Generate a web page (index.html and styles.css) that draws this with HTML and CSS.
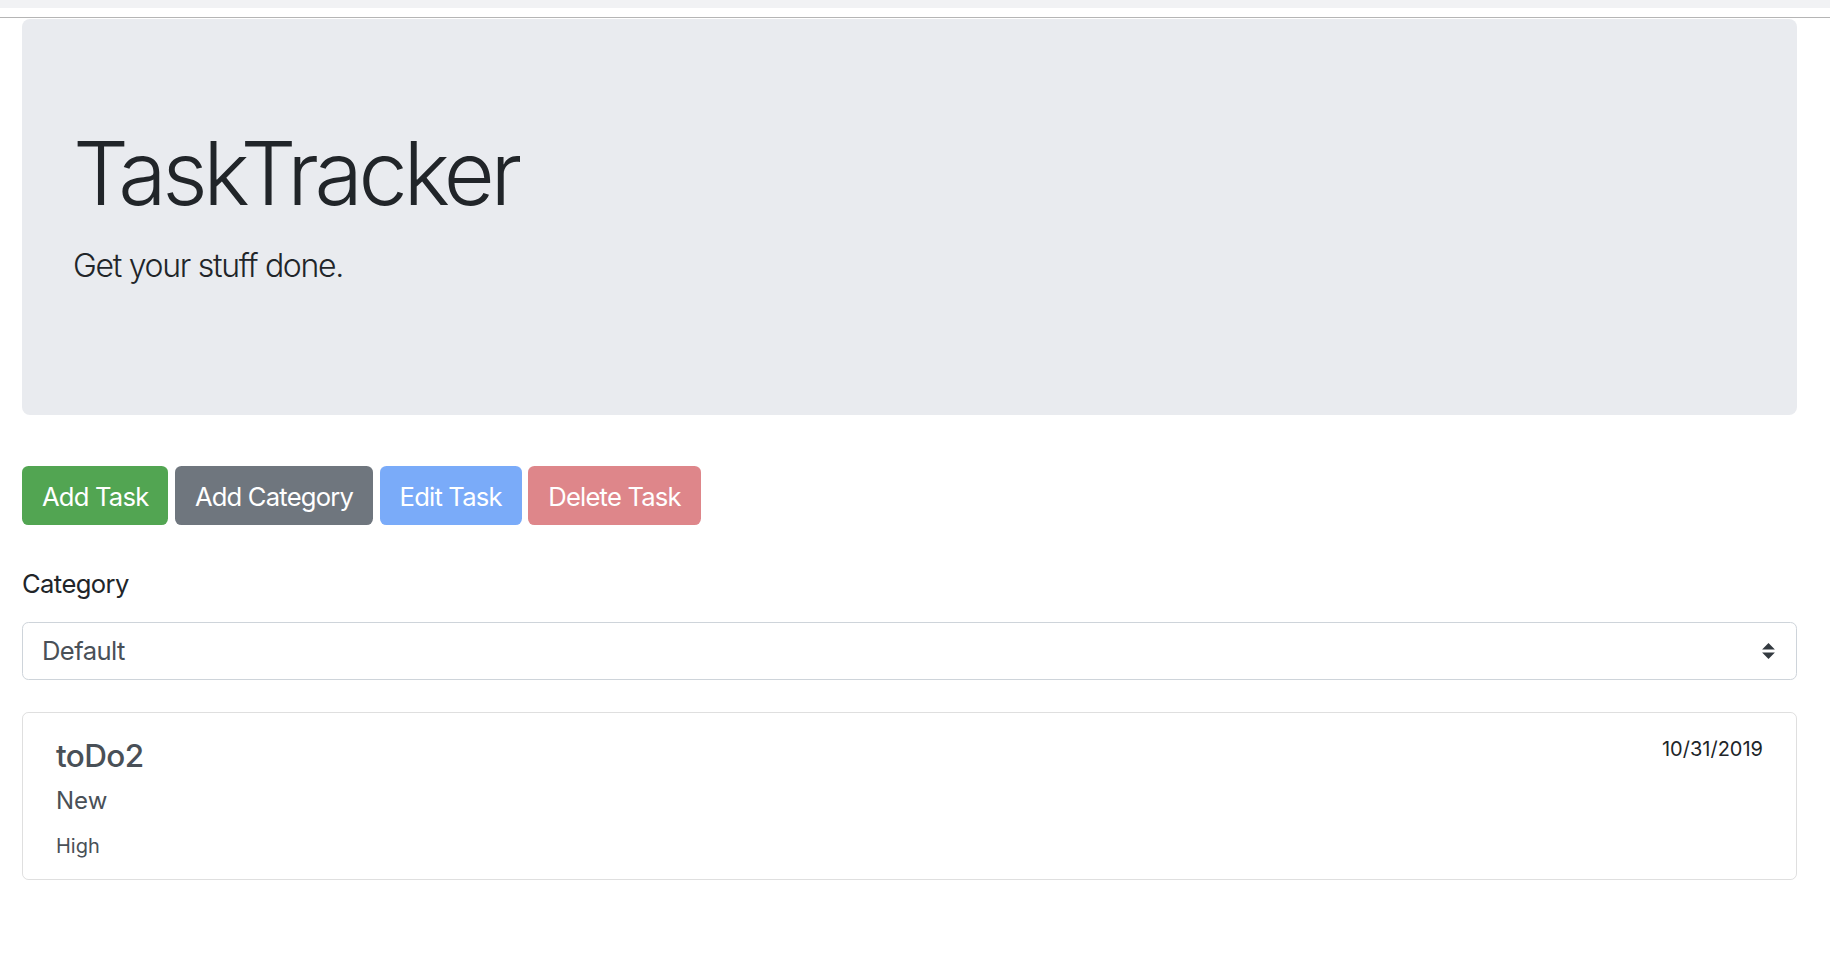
FILE: index.html
```html
<!DOCTYPE html>
<html lang="en">
<head>
<meta charset="utf-8">
<title>TaskTracker</title>
<link rel="stylesheet" href="styles.css">
</head>
<body>
<div class="topbar"></div>
<div class="topline"></div>
<main class="page">
  <section class="jumbotron">
    <h1 class="display">TaskTracker</h1>
    <p class="lead">Get your stuff done.</p>
  </section>
  <div class="actions">
    <button class="btn btn-success">Add Task</button>
    <button class="btn btn-secondary">Add Category</button>
    <button class="btn btn-primary">Edit Task</button>
    <button class="btn btn-danger">Delete Task</button>
  </div>
  <div class="form-group">
    <label class="label" for="cat">Category</label>
    <div class="select" id="cat">
      <span class="select-value">Default</span>
      <svg class="select-arrows" viewBox="0 0 4 5" width="13" height="16"><path d="M2 0L0 2h4zm0 5L0 3h4z" fill="#343a40"/></svg>
    </div>
  </div>
  <div class="card">
    <div class="card-body">
      <div class="card-main">
        <h5 class="card-title">toDo2</h5>
        <h6 class="card-subtitle">New</h6>
        <p class="card-text">High</p>
      </div>
      <div class="card-date">10/31/2019</div>
    </div>
  </div>
</main>
</body>
</html>
```
FILE: styles.css
```css
html, body {
  margin: 0;
  padding: 0;
  background: #fff;
}
body {
  font-family: Inter, "Noto Sans", "Liberation Sans", sans-serif;
  color: #212529;
  font-size: 25.6px;
  line-height: 1.5;
}
.topbar {
  height: 8px;
  background: #f1f2f4;
}
.topline {
  height: 9px;
  border-bottom: 1px solid #b5b5b5;
}
.page {
  padding: 1px 33px 0 22px;
}
.jumbotron {
  background: #e9ebef;
  border-radius: 8px;
  padding: 102px 51px;
  margin-bottom: 51px;
}
.display {
  margin: 0 0 15px;
  font-size: 88px;
  font-weight: 300;
  line-height: 1.2;
  letter-spacing: -4.3px;
  color: #212529;
}
.lead {
  margin: 0 0 23px;
  font-size: 32px;
  font-weight: 300;
  line-height: 1.5;
  letter-spacing: -1.3px;
}
.actions {
  display: flex;
  gap: 6.5px;
  margin-bottom: 39.5px;
}
.btn {
  font-family: inherit;
  font-size: 25.6px;
  line-height: 38.4px;
  padding: 11px 19px 8.2px;
  border: 1.6px solid transparent;
  border-radius: 6.4px;
  color: #fff;
  letter-spacing: -0.8px;
}
.btn-success { background: #52a552; }
.btn-secondary { background: #6f767e; }
.btn-primary { background: #7aabf9; }
.btn-danger { background: #de868a; }
.form-group {
  margin-bottom: 32px;
}
.label {
  display: block;
  margin-bottom: 19px;
  letter-spacing: -0.6px;
}
.select {
  display: flex;
  align-items: center;
  justify-content: space-between;
  height: 58px;
  box-sizing: border-box;
  border: 1.6px solid #ced4da;
  border-radius: 6.4px;
  padding: 0 19px;
  color: #495057;
  letter-spacing: -0.6px;
}
.select-arrows {
  display: block;
  margin-right: 2px;
}
.card {
  border: 1.6px solid rgba(0, 0, 0, 0.125);
  border-radius: 6.4px;
}
.card-body {
  display: flex;
  justify-content: space-between;
  align-items: flex-start;
  padding: 24px 33px 18px;
}
.card-title {
  margin: 0 0 12px;
  font-size: 31.5px;
  font-weight: 500;
  line-height: 1.2;
  color: #495057;
  letter-spacing: -0.6px;
}
.card-subtitle {
  margin: 0 0 15px;
  font-size: 24px;
  font-weight: 400;
  line-height: 1.2;
  color: #495057;
}
.card-text {
  margin: 0;
  font-size: 20px;
  line-height: 1.5;
  color: #495057;
}
.card-date {
  font-size: 20px;
  line-height: 24px;
  color: #212529;
}
```
